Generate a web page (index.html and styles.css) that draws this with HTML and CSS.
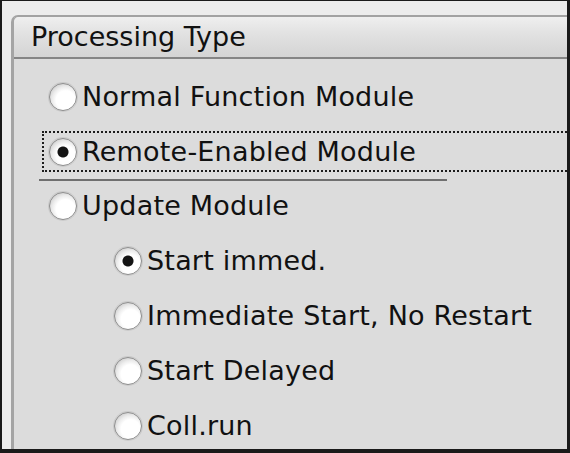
FILE: index.html
```html
<!DOCTYPE html>
<html lang="en">
<head>
  <meta charset="UTF-8">
  <meta name="viewport" content="width=device-width, initial-scale=1.0">
  <title>Processing Type</title>
  <link rel="stylesheet" href="styles.css">
</head>
<body>
  <div class="frame">
    <div class="group">
      <div class="group-title">Processing Type</div>

      <div class="group-body">
        <div class="option">
          <span class="radio"></span>
          <span class="label">Normal Function Module</span>
        </div>

        <div class="option focused">
          <span class="radio checked"></span>
          <span class="label">Remote-Enabled Module</span>
        </div>

        <div class="separator"></div>

        <div class="option">
          <span class="radio"></span>
          <span class="label">Update Module</span>
        </div>

        <!-- Unterpunkte für Verbuchungsbaustein -->
        <div class="option sub">
          <span class="radio checked"></span>
          <span class="label">Start immed.</span>
        </div>
        <div class="option sub">
          <span class="radio"></span>
          <span class="label">Immediate Start, No Restart</span>
        </div>
        <div class="option sub">
          <span class="radio"></span>
          <span class="label">Start Delayed</span>
        </div>
        <div class="option sub">
          <span class="radio"></span>
          <span class="label">Coll.run</span>
        </div>
      </div>
    </div>
  </div>
</body>
</html>
```

FILE: styles.css
```css
html, body {
  margin: 0;
  padding: 0;
}

body {
  font-family: 'DejaVu Sans', Verdana, sans-serif;
  color: #111;
  background-color: #1a1a1a;
}

.frame {
  width: 570px;
  height: 453px;
  box-sizing: border-box;
  border-style: solid;
  border-color: #1a1a1a;
  border-width: 1px 3px 4px 2px;
  background-color: #ececec;
  padding: 14px 0 0 9px;
  overflow: hidden;
}

.group {
  width: 620px;
  height: 520px;
  border-top: 2px solid #a2a2a2;
  border-left: 3px solid #a4a4a4;
  border-top-left-radius: 7px;
  background-color: #dcdcdc;
}

.group-title {
  height: 40px;
  line-height: 40px;
  padding-left: 17px;
  font-size: 27px;
  background: linear-gradient(to bottom, #efefef, #e2e2e2 40%, #d4d4d4);
  border-top-left-radius: 5px;
  border-bottom: 2px solid #858585;
}

.group-body {
  padding-top: 10px;
}

.option {
  display: flex;
  align-items: center;
  height: 55px;
  padding-left: 35px;
}

.option.sub {
  padding-left: 100px;
}

.option.focused {
  margin: 7px 0 7px 28px;
  padding: 0 0 0 5px;
  border: 2px dotted #1c1c1c;
  height: 37px;
}

.radio {
  width: 26px;
  height: 26px;
  flex: none;
  border: 1.5px solid #8e8e8e;
  border-radius: 50%;
  margin-right: 5px;
  background: radial-gradient(circle at 60% 62%, #ffffff 42%, #ececec 60%, #b0b0b0 100%);
  box-shadow: 0 0 0 1px #cacaca;
}

.radio.checked {
  background:
    radial-gradient(circle at 50% 50%, #141414 0 5px, transparent 6px),
    radial-gradient(circle at 60% 62%, #ffffff 42%, #ececec 60%, #b0b0b0 100%);
}

.label {
  font-size: 27px;
  line-height: 41px;
  letter-spacing: 0.2px;
  white-space: nowrap;
}

.separator {
  width: 408px;
  height: 2px;
  margin: 1px 0 -3px 25px;
  background-color: #6f6f6f;
}
```
